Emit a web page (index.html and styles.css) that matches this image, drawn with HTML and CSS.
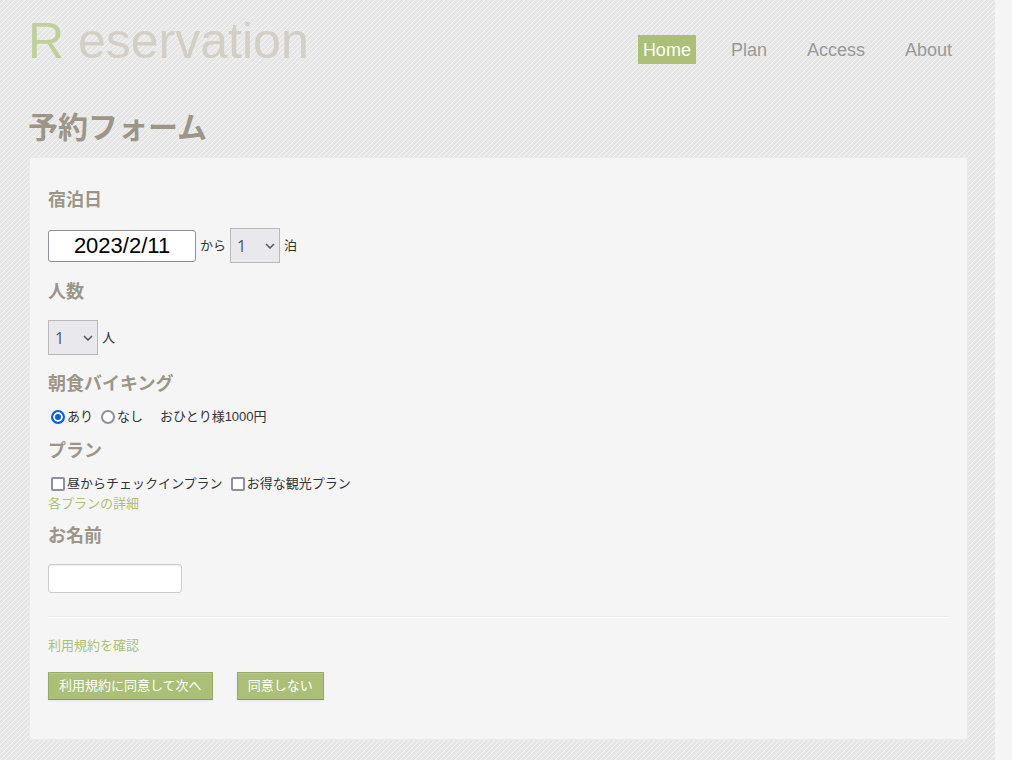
FILE: index.html
```html
<!DOCTYPE html>
<html lang="ja">
<head>
<meta charset="utf-8">
<meta name="viewport" content="width=device-width, initial-scale=1">
<title>予約フォーム</title>
<link rel="stylesheet" href="styles.css">
</head>
<body>
<div class="page">
  <header class="header">
    <div class="logo"><span class="logo-initial">R</span> eservation</div>
    <nav class="nav">
      <a class="nav-link active" href="#home">Home</a>
      <a class="nav-link" href="#plan">Plan</a>
      <a class="nav-link" href="#access">Access</a>
      <a class="nav-link" href="#about">About</a>
    </nav>
  </header>
  <main>
    <h1 class="title">予約フォーム</h1>
    <form class="card">
      <h2 class="heading" id="date-heading">宿泊日</h2>
      <div class="row row-tall">
        <input class="date" type="text" value="2023/2/11" aria-labelledby="date-heading">
        <label for="nights">から</label>
        <span class="picker">
          <select class="select" id="nights"><option>1</option><option>2</option><option>3</option></select>
          <svg class="chevron" viewBox="0 0 10 6" aria-hidden="true"><path d="M1 1l4 4 4-4"/></svg>
        </span>
        <span>泊</span>
      </div>
      <h2 class="heading" id="guests-heading">人数</h2>
      <div class="row row-tall">
        <span class="picker">
          <select class="select" aria-labelledby="guests-heading"><option>1</option><option>2</option><option>3</option></select>
          <svg class="chevron" viewBox="0 0 10 6" aria-hidden="true"><path d="M1 1l4 4 4-4"/></svg>
        </span>
        <span>人</span>
      </div>
      <h2 class="heading">朝食バイキング</h2>
      <div class="row options breakfast">
        <label class="option"><input class="radio" type="radio" name="breakfast" checked>あり</label>
        <label class="option"><input class="radio" type="radio" name="breakfast">なし</label>
        <span class="price">おひとり様1000円</span>
      </div>
      <h2 class="heading">プラン</h2>
      <div class="row options">
        <label class="option"><input class="check" type="checkbox" name="early">昼からチェックインプラン</label>
        <label class="option"><input class="check" type="checkbox" name="tour">お得な観光プラン</label>
      </div>
      <div class="row plan-details"><a class="link" href="#plans">各プランの詳細</a></div>
      <h2 class="heading" id="name-heading">お名前</h2>
      <div class="row row-name"><input class="name" type="text" aria-labelledby="name-heading"></div>
      <hr class="rule">
      <div class="row"><a class="link" href="#terms">利用規約を確認</a></div>
      <div class="actions">
        <button class="button" type="submit">利用規約に同意して次へ</button>
        <button class="button" type="button">同意しない</button>
      </div>
    </form>
  </main>
</div>
</body>
</html>
```
FILE: styles.css
```css
* { box-sizing: border-box; }

body {
  margin: 0;
  background: #f5f5f5;
  color: #333;
  font: 13px/20px "Liberation Sans", "Noto Sans CJK JP", sans-serif;
}

.page {
  min-height: 100vh;
  margin-right: 17px;
  padding: 0 27px 20px 28px;
  background: #e6e6e6 url("data:image/svg+xml,%3Csvg xmlns='http://www.w3.org/2000/svg' width='5' height='5' shape-rendering='crispEdges' fill='%23f5f5f5'%3E%3Cpath d='M4 0h1v1h-1zM3 1h1v1h-1zM2 2h1v1h-1zM1 3h1v1h-1zM0 4h1v1h-1z'/%3E%3C/svg%3E");
}

.header {
  display: flex;
  justify-content: space-between;
  align-items: flex-start;
  height: 108px;
}

.logo {
  padding-top: 12px;
  font-size: 50px;
  line-height: 58px;
  color: #d3cec6;
}

.logo-initial { color: #c1d09b; }

.nav {
  display: flex;
  gap: 30px;
  padding: 35px 11px 0 0;
}

.nav-link {
  padding: 1px 5px 0;
  font-size: 18px;
  line-height: 28px;
  color: #999;
  text-decoration: none;
}

.nav-link.active { background: #acbf77; color: #fff; }

.title {
  margin: 0 0 9px;
  font-size: 30px;
  line-height: 40px;
  color: #9c9588;
}

.card {
  margin: 0 0 0 1px;
  padding: 29px 18px 39px;
  border: 1px solid #eaeaea;
  border-radius: 3px;
  background: #f5f5f5;
}

.heading {
  margin: 0;
  font-size: 18px;
  line-height: 27px;
  color: #9c9588;
}

.row {
  display: flex;
  align-items: center;
  gap: 4px;
}

.row-tall { height: 65px; padding-bottom: 2px; }

.date {
  width: 148px;
  height: 32px;
  border: 1px solid #8f8f9d;
  border-radius: 3px;
  background: #fff;
  color: #000;
  font: 22px "Liberation Sans", sans-serif;
  text-align: center;
}

.picker { display: grid; align-items: center; }

.select {
  grid-area: 1 / 1;
  width: 50px;
  height: 35px;
  padding: 0 6px;
  border: 1px solid #b9b9b9;
  border-radius: 0;
  background: #e9e9ed;
  color: #555;
  font: 16px "Open Sans", sans-serif;
  appearance: none;
}

.chevron {
  grid-area: 1 / 1;
  justify-self: end;
  width: 10px;
  height: 6px;
  margin-right: 5px;
  fill: none;
  stroke: #555;
  stroke-width: 1.5;
  pointer-events: none;
}

.options { margin-top: 9px; padding-left: 3px; gap: 8px; }
.breakfast { margin-bottom: 11px; }
.plan-details { margin-bottom: 9px; }
.option { display: flex; align-items: center; gap: 2px; }
.price { margin-left: 9px; }

.radio,
.check {
  width: 14px;
  height: 14px;
  margin: 0;
  border: 2px solid #8f8f9d;
  background: #fff;
  appearance: none;
}

.radio { border-radius: 50%; }
.check { border-radius: 2px; }

.radio:checked {
  border-color: #0060df;
  background: #0060df;
  box-shadow: inset 0 0 0 2px #fff;
}

.link { color: #acbf77; text-decoration: none; }

.row-name { height: 58px; padding-bottom: 2px; }

.name {
  width: 134px;
  height: 29px;
  padding: 4px 6px;
  border: 1px solid #ccc;
  border-radius: 3px;
  background: #fff;
  box-shadow: inset 0 1px 1px #eee;
  font: inherit;
}

.rule {
  height: 2px;
  margin: 8px 0 18px;
  border: 0;
  border-top: 1px solid #eaeaea;
  border-bottom: 1px solid #fff;
}

.actions { display: flex; gap: 24px; padding-top: 16px; }

.button {
  height: 28px;
  padding: 0 10px;
  border: 1px solid #98aa68;
  border-bottom-color: #87985a;
  background: #acbf77;
  box-shadow: inset 0 1px 0 #bbcb90, 0 1px 2px #e6e6e6;
  color: #fff;
  font: inherit;
}
```
